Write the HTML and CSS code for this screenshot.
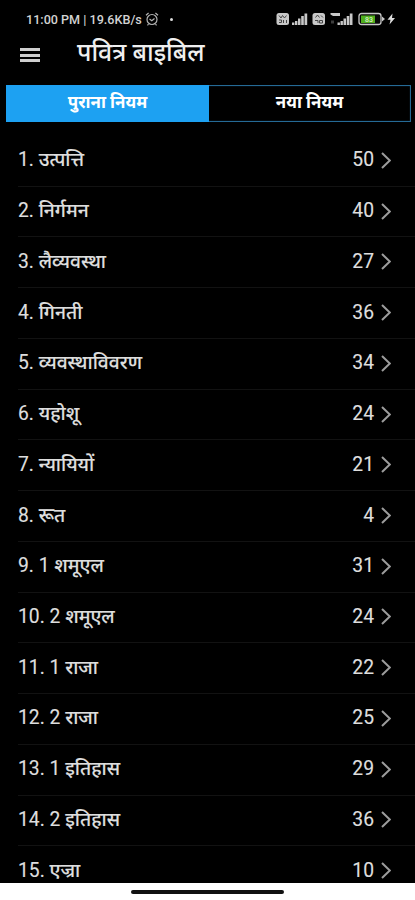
FILE: index.html
```html
<!DOCTYPE html>
<html lang="hi">
<head>
<meta charset="utf-8">
<title>पवित्र बाइबिल</title>
<link rel="stylesheet" href="styles.css">
</head>
<body>
<div class="screen">
  <div class="status">
    <span class="clock">11:00 PM | 19.6KB/s</span>
    <svg class="alarm" width="14" height="14" viewBox="0 0 14 14" fill="none" stroke="#b4b4b4" stroke-width="1.2"><circle cx="7" cy="7.5" r="5"/><path d="M1 3.2 3.6 1M13 3.2 10.4 1M4.5 7l2.3 1.8L9.5 6.5M3.5 12l-1 1.3M10.5 12l1 1.3"/></svg>
    <span class="dot"></span>
    <svg class="indicators" width="120" height="14" viewBox="0 0 120 14">
      <g fill="#c8c8c8">
        <rect x="0.5" y="1" width="12.5" height="12" rx="2.5"/>
        <path d="M16 10.500h2.400V13h-2.400zM19 9h2.400v4h-2.400zM22 6.500h2.500V13h-2.500zM25.200 4h2.600v9h-2.600zM28.500 1.500h2.700V13h-2.700z"/>
        <rect x="36.500" y="1" width="12.500" height="12" rx="2.500"/>
        <path d="M61.500 10.500h2.400V13h-2.400zM64.500 9h2.400v4h-2.400zM67.500 6.500h2.500V13h-2.500zM70.700 4h2.600v9h-2.600zM73.800 1.500h2.700V13h-2.700z"/>
        <path d="M54.500 1h9.500v3h-7l-2.500-1.500z"/>
      </g>
      <path d="M55 8.500h3v3h-3z" fill="#3c3c3c"/>
      <path d="M3 3.500 5 6l1.500-2.500L8.500 6l2-2.500M3 8h2.500v2.500H3M7.500 8v3M10.500 8v3M39.500 5.500l2-2.500 2 2.500M45 3.500l2 2M39 8.500h3V11M43.500 8.500h3V11h-3z" fill="none" stroke="#444"/>
      <rect x="83" y="1.500" width="22" height="11" rx="2.500" fill="#080808" stroke="#c9c9c9" stroke-width="1.300"/>
      <path d="M106 4.500 109 7l-3 2.500z" fill="#c9c9c9"/>
      <rect x="85" y="3.500" width="14" height="7.500" fill="#4fae1d"/>
      <text class="charge" x="89" y="9.700">83</text>
      <path d="M116.500 1.500 111.500 7.800h3L113.500 12.500 119 6h-3z" fill="#ddd"/>
    </svg>
  </div>
  <header class="appbar">
    <div class="menu"><i></i><i></i><i></i></div>
    <h1>पवित्र बाइबिल</h1>
  </header>
  <nav class="tabs">
    <div class="tab active"><span>पुराना नियम</span></div>
    <div class="tab"><span>नया नियम</span></div>
  </nav>
  <main class="books" id="books"></main>
  <footer class="gesture"><div class="pill"></div></footer>
</div>
<script src="books.js"></script>
</body>
</html>
```
FILE: styles.css
```css
* { box-sizing: border-box; }
body { margin: 0; background: #000; color: #dedede; font-family: Roboto, "Noto Sans", sans-serif; }
.screen { width: 415px; height: 900px; display: flex; flex-direction: column; overflow: hidden; background: #000; }
.status { height: 34px; flex: none; display: flex; align-items: center; padding: 4px 0 0 26px; }
.clock { width: 118px; font-size: 12.6px; font-weight: 500; white-space: nowrap; color: #d2d2d2; }
.alarm { margin-left: 1px; }
.dot { width: 3px; height: 3px; margin-left: 11px; border-radius: 50%; background: #ddd; }
.indicators { margin-left: 103px; }
.charge { font: 500 7px Roboto, sans-serif; fill: #d8f2c6; }
.appbar { height: 51px; flex: none; display: flex; padding-left: 20px; }
.menu { width: 20px; padding-top: 14px; display: flex; flex-direction: column; gap: 2.7px; }
.menu i { height: 3px; background: #cfcfcf; }
h1 { margin: 0 0 0 37px; font-size: 24.8px; line-height: 38px; font-weight: 500; color: #efefef; white-space: nowrap; }
.tabs { height: 37px; flex: none; display: flex; margin: 0 4px 0 6px; border: 1px solid #256a96; box-shadow: inset 0 0 1px #256a96; }
.tab { flex: 1; text-align: center; font-size: 16.9px; line-height: 32px; font-weight: 700; color: #fff; }
.tab.active { flex: 0 0 203px; background: #1da1f2; margin: -1px 0 -1px -1px; padding-top: 1px; }
.books { flex: 1; min-height: 0; overflow: hidden; padding: 14px 0 0 18px; }
.book { height: 50.74px; display: flex; align-items: center; border-bottom: 1px solid #121212; font-size: 19.3px; line-height: 24px; padding-bottom: 1px; }
.name { flex: 1; white-space: nowrap; -webkit-text-stroke: 0.15px #dedede; }
.title { font-size: 19.2px; font-weight: 500; }
.count { margin-right: 7px; -webkit-text-stroke: 0.15px #dedede; }
.chevron { margin-right: 24px; }
.gesture { height: 17px; flex: none; background: #fff; padding-top: 7px; }
.pill { width: 153px; height: 4px; margin-left: 131px; border-radius: 2px; background: #111; }
```
FILE: books.js
```js
const books = [
  ['1. ', 'उत्पत्ति', 50], ['2. ', 'निर्गमन', 40], ['3. ', 'लैव्यवस्था', 27],
  ['4. ', 'गिनती', 36], ['5. ', 'व्यवस्थाविवरण', 34], ['6. ', 'यहोशू', 24],
  ['7. ', 'न्यायियों', 21], ['8. ', 'रूत', 4], ['9. 1 ', 'शमूएल', 31],
  ['10. 2 ', 'शमूएल', 24], ['11. 1 ', 'राजा', 22], ['12. 2 ', 'राजा', 25],
  ['13. 1 ', 'इतिहास', 29], ['14. 2 ', 'इतिहास', 36], ['15. ', 'एज्रा', 10]
];
document.getElementById('books').innerHTML = books.map(([number, title, chapters]) => `
  <div class="book">
    <span class="name">${number}<span class="title">${title}</span></span>
    <span class="count">${chapters}</span>
    <svg class="chevron" width="10" height="17" viewBox="0 0 10 17" fill="none" stroke="#9c9c9c" stroke-width="2"><path d="M1 1 8.800 8.500 1 16"/></svg>
  </div>`).join('');
```
